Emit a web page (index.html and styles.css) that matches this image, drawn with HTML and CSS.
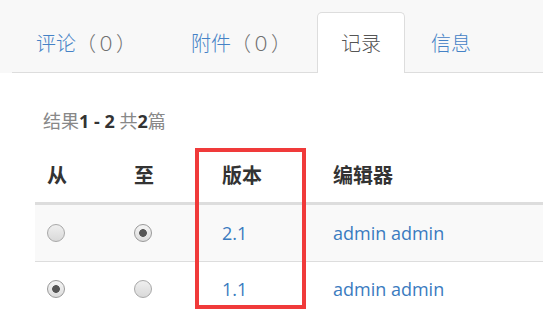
FILE: index.html
```html
<!DOCTYPE html>
<html lang="zh">
<head>
<meta charset="utf-8">
<title>记录</title>
<link rel="stylesheet" href="styles.css">
</head>
<body>
<div class="tabbar">
  <ul class="tabs">
    <li class="tab tab-first"><a href="#">评论<span class="count">（０）</span></a></li>
    <li class="tab"><a href="#">附件<span class="count">（０）</span></a></li>
    <li class="tab active"><a href="#">记录</a></li>
    <li class="tab"><a href="#">信息</a></li>
  </ul>
</div>
<div class="content">
  <p class="summary">结果<b>1 - 2</b> 共<b>2</b>篇</p>
  <div class="grid">
    <div class="row head">
      <div class="cell">从</div>
      <div class="cell">至</div>
      <div class="cell">版本</div>
      <div class="cell">编辑器</div>
    </div>
    <div class="row striped">
      <div class="cell"><input class="radio" type="radio" name="from"></div>
      <div class="cell"><input class="radio" type="radio" name="to" checked></div>
      <div class="cell"><a class="link" href="#">2.1</a></div>
      <div class="cell"><a class="link" href="#">admin admin</a></div>
    </div>
    <div class="row last">
      <div class="cell"><input class="radio" type="radio" name="from" checked></div>
      <div class="cell"><input class="radio" type="radio" name="to"></div>
      <div class="cell"><a class="link" href="#">1.1</a></div>
      <div class="cell"><a class="link" href="#">admin admin</a></div>
    </div>
  </div>
</div>
<div class="highlight"></div>
</body>
</html>
```
FILE: styles.css
```css
html, body {
  margin: 0;
  padding: 0;
  background: #fff;
  overflow: hidden;
}
body {
  position: relative;
  font-family: "Open Sans", "Noto Sans CJK SC", sans-serif;
  color: #333;
}
.tabbar {
  background: #f8f8f8;
  padding: 12px 0 0 12px;
}
.tabs {
  list-style: none;
  margin: 0;
  padding: 0;
  display: flex;
  border-bottom: 1px solid #ddd;
  height: 60px;
}
.tab {
  height: 61px;
  margin: 0 2px -1px 0;
  box-sizing: border-box;
  border: 1px solid transparent;
  border-bottom: none;
  border-radius: 5px 5px 0 0;
}
.tab-first {
  margin-right: 7px;
}
.tab a {
  display: flex;
  align-items: center;
  height: 58px;
  padding: 0 23px;
  font-family: "Noto Sans CJK SC", sans-serif;
  font-size: 20px;
  font-weight: 300;
  color: #4582c6;
  text-decoration: none;
}
.tab .count {
  color: #707070;
}
.tab.active {
  background: #fff;
  border-color: #ddd;
}
.tab.active a {
  color: #555;
}
.content {
  padding-left: 35px;
}
.summary {
  margin: 36px 0 0 8px;
  height: 24px;
  line-height: 24px;
  font-size: 18px;
  color: #888;
}
.summary b {
  color: #333;
  font-weight: 700;
}
.grid {
  margin-top: 14px;
}
.row {
  display: grid;
  grid-template-columns: 87px 88px 111px 1fr;
  height: 56px;
  align-items: center;
  border-bottom: 1px solid #ddd;
}
.row.last {
  height: 54px;
  border-bottom: none;
}
.row.head {
  height: 55px;
  border-bottom: 3px solid #ddd;
  font-family: "Noto Sans CJK SC", sans-serif;
  font-size: 20px;
  font-weight: 700;
  color: #333;
}
.row.striped {
  background: #f9f9f9;
}
.cell {
  padding-left: 12px;
  display: flex;
  align-items: center;
}
.link {
  font-size: 18px;
  color: #3a7bc0;
  text-decoration: none;
}
.radio {
  -webkit-appearance: none;
  appearance: none;
  margin: 0;
  width: 18px;
  height: 18px;
  border-radius: 50%;
  border: 1px solid #a8a8a8;
  background: linear-gradient(#efefef, #d9d9d9);
  box-sizing: border-box;
}
.radio:checked {
  border-color: #999;
  background: radial-gradient(circle, #555 0, #555 3.5px, transparent 4.2px), linear-gradient(#f5f5f5, #dcdcdc);
}
.highlight {
  position: absolute;
  left: 195px;
  top: 148px;
  width: 111px;
  height: 161px;
  box-sizing: border-box;
  border: 4px solid #f03a3a;
}
```
